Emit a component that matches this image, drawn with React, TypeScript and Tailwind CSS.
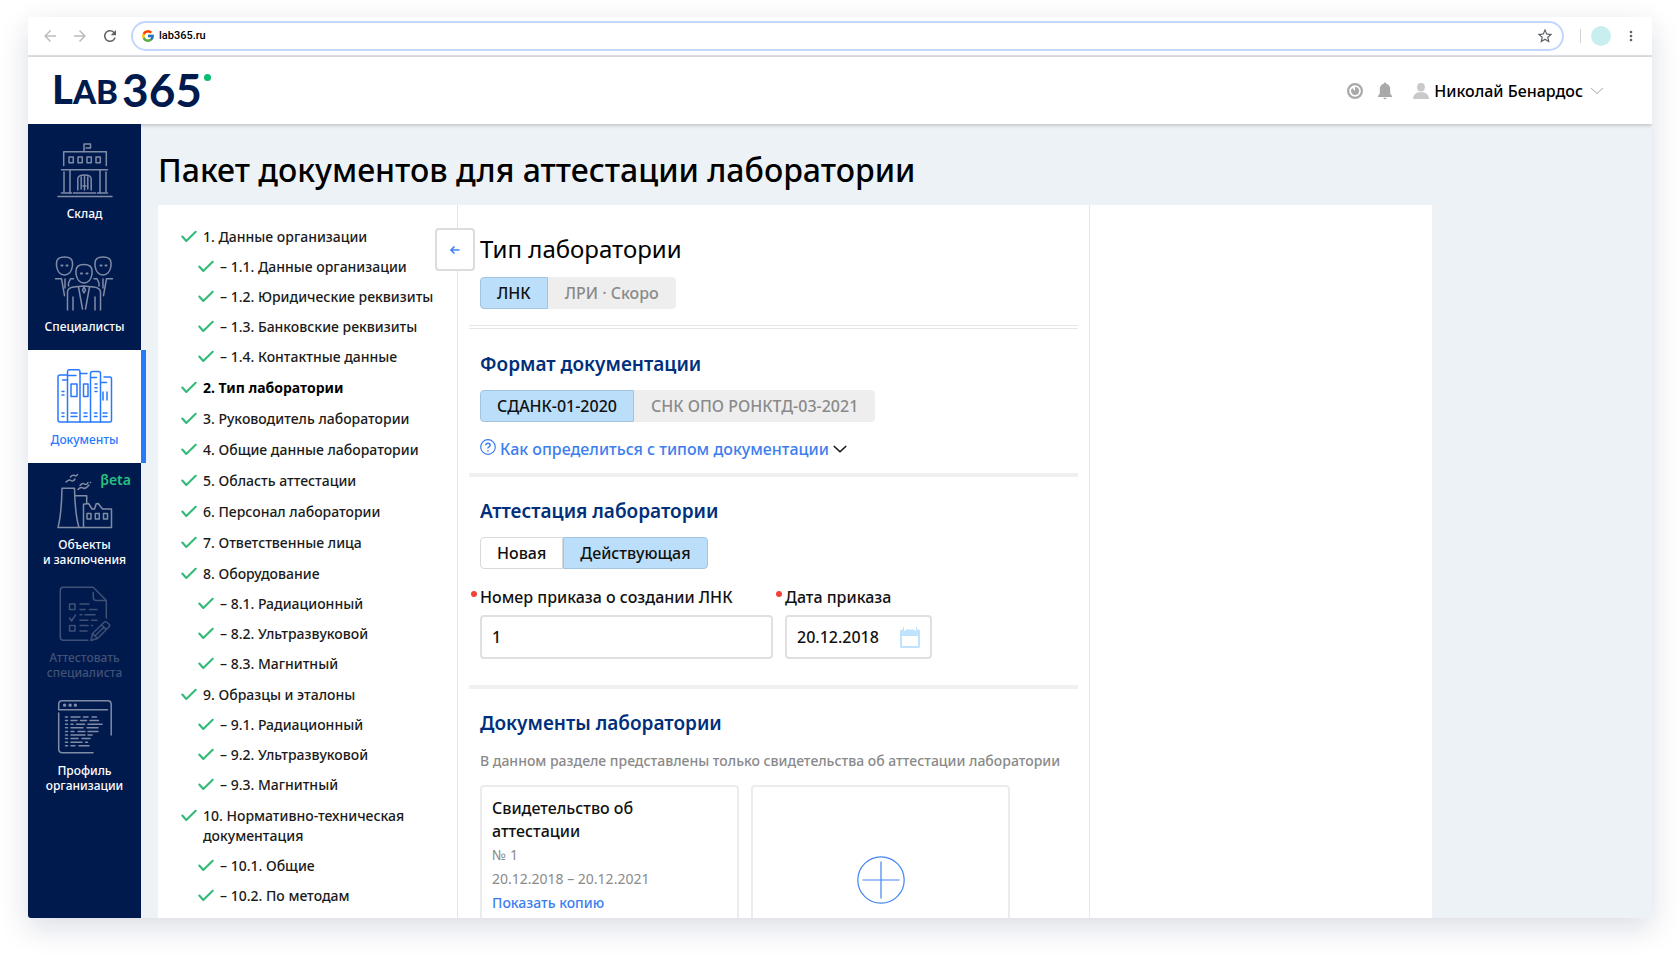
import React from 'react';
import { FcGoogle } from 'react-icons/fc';
import { MdArrowBack, MdArrowForward, MdMoreVert, MdRefresh, MdStarBorder } from 'react-icons/md';

interface IconProps {
  className?: string;
}

interface NavItem {
  lines: string[];
  icon: React.FC<IconProps>;
  active?: boolean;
  disabled?: boolean;
  beta?: boolean;
}

interface Step {
  title: string;
  current?: boolean;
  children?: string[];
}

interface ToggleOption {
  label: string;
  selected?: boolean;
  disabled?: boolean;
}

const NavSvg: React.FC<{ className?: string; children: React.ReactNode }> = ({ className, children }) => (
  <svg
    className={className}
    width="54"
    height="54"
    viewBox="0 0 54 54"
    fill="none"
    stroke="currentColor"
    strokeWidth="1.5"
    strokeLinecap="round"
    strokeLinejoin="round"
    overflow="visible"
    aria-hidden="true"
  >
    {children}
  </svg>
);

const WarehouseIcon: React.FC<IconProps> = ({ className }) => (
  <NavSvg className={className}>
    <path d="M26 8.7V1h6.5v4H28" />
    <path d="M5.7 22.5V8.7h42.6v13.8" />
    <path d="M11 14h4.3v5.7H11zM20 14h4.3v5.7H20zM29 14h4.3v5.7H29zM38 14h4.3v5.7H38z" />
    <path d="M3.5 26.7h46M6 29v20M12 27v23M42 27v23M48 29v20" />
    <path d="M3.5 50h10M15.5 50h22M39.5 50h10M0 53.5h54" />
    <path d="M19.8 47V36q0-4 6.7-4t6.7 4v11M23.2 46V34M29.8 46V34M26.5 33.5V47M25 43h3" />
  </NavSvg>
);

const SpecialistsIcon: React.FC<IconProps> = ({ className }) => (
  <NavSvg className={className}>
    <path d="M-1.5 7Q-1.5 1 6.5 1t8 6v3q-1.500 9-8 9t-8-9z" />
    <path d="M37 7q0-6 8-6t8 6v3q-1.500 9-8 9t-8-9z" />
    <path d="M18 15q0-6.500 8-6.500t8 6.500v3q-1.500 9-8 9t-8-9z" />
    <path d="M3.500 9.500h1M8.500 9.500h1M42.500 9.500h1M47.500 9.500h1M23 17.500h1M28.500 17.500h1" strokeWidth="2" />
    <path d="M-2.500 22.700h6l3 17M7 23v9M10.500 30V27l2-4.300h3" />
    <path d="M54.500 22.700h-6l-3 17M45 23v9M41 30V27l-2-4.300h-3" />
    <path d="M9.500 54V36q0-4 6-5l10-1 10 1q7 1 7 5v18M15 41v13M37 41v13" />
    <path d="M20.500 31l4 22M31.500 31l-4 22M26 31l1.500 3L26 37l-1.500-3z" />
  </NavSvg>
);

const DocumentsIcon: React.FC<IconProps> = ({ className }) => (
  <NavSvg className={className}>
    <path d="M9.500 6H2Q0 6 0 8v43q0 2 2 2h50q1.500 0 1.500-2V10q0-2-1.500-2h-6" />
    <path d="M9.500 53V3q0-2.200 2-2.200h8.500q2 0 2 2.200v50M9.500 6.500H18" />
    <path d="M22 4.500h7M32.500 53V4.500q0-2 2-2h6q2 0 2 2V53M32.500 8.500h6M4.500 11h5M42.500 13.500h6" />
    <path d="M13 15h6v12.500h-6zM25.500 15H30v12.500h-4.500z" />
    <path d="M4 22.500h2M4 26h2M37 15h2M37 18.700h2M37 22.500h2M45 23v8M49 23v8" />
    <path d="M4 44h2M4 47.500h2M13 44h6M13 47.500h6M26 44h3M26 47.500h3M36.500 44h2.500M36.500 47.500h2.500M45 44h4M45 47.500h4" />
  </NavSvg>
);

const FactoryIcon: React.FC<IconProps> = ({ className }) => (
  <NavSvg className={className}>
    <path d="M0 53.500Q3.500 40 4 14.300h12.500Q17 40 21 53.500M0 53.500h53.500V35h-9l-4.300-5.500-2 .2-1.700 5.300h-2.500l-3.500-5.500-5 .8v23.200" />
    <path d="M17.500 21.700h11.200V29" />
    <path d="M29 39.500h4v5.500h-4zM37.300 39.500h4v5.500h-4zM45.500 39.500h4v5.500h-4z" />
    <path d="M8 8q3-3 5-1.500T17 5M12.500 3q2-2.500 4-1.500t3-1M20 15.500q2.500-3 5-1.500t6-3M22 11.500q2.500-3 4.500-1.500T30 8.500M32.500 8.500h.2" />
  </NavSvg>
);

const CertifyIcon: React.FC<IconProps> = ({ className }) => (
  <NavSvg className={className}>
    <path d="M30 53.300H5.300q-3 0-3-3v-47q0-3 3-3h30l13 13.200V31M35.300 5.500v5q0 3 3 3h10" />
    <path d="M11.500 17h5.500v5.500h-5.500zM11.500 38.500h5.500V44h-5.500zM11.500 31l2 3 4-6" />
    <path d="M22 17h9M22 22.500h5M31.500 22.500h7.500M22 27.700h2M27 27.700h10M22 33.300h8M33.500 33.300h5.500M22 38.500h8M33.500 38.500h1M22 44h7" />
    <path d="M33 53.500l1.500-7 12-11.500q1-1 2 0l2.800 2.500q1 1 0 2L39.500 51.500zM34.500 46.500l5 5M43.500 38l5 4.500M37 49l9-9" />
  </NavSvg>
);

const ProfileIcon: React.FC<IconProps> = ({ className }) => (
  <NavSvg className={className}>
    <path d="M.7 9.700V4.500q0-3.700 3.500-3.700h45.500q3.500 0 3.500 3.700V35M.7 9.700h48.800M.7 13v36q0 3.700 3.500 3.700H35" />
    <path d="M6.500 5.200h.2M12 5.200h.2M17.300 5.200h.2" strokeWidth="3.200" />
    <path d="M7.500 17h2M13 17h9M25.500 17h4.500M34 17h4.500M7.500 20.600h2M13 20.600h6M22.500 20.600h6M32 20.600h8.500M7.500 24.200h2M13 24.200h2M18.500 24.200h8M30 24.200h14M7.500 27.800h2M13 27.800h12M29 27.800h11M7.500 31.400h2M13 31.400h3M20 31.400h7M30 31.400h10M7.500 35h2M13 35h14M30 35h4M7.500 38.600h2M13 38.600h7M24 38.600h8M7.500 42.200h2M13 42.200h11M27.500 42.200h2M7.500 45.800h2M13 45.800h4M21 45.800h10" />
  </NavSvg>
);

const CheckIcon = () => (
  <svg className="mt-[3px] shrink-0" width="16" height="13" viewBox="0 0 16 13" fill="none" aria-hidden="true">
    <path d="M1.300 6.500L5.300 11 14.700 1.800" stroke="#34ba78" strokeWidth="2.100" strokeLinecap="round" strokeLinejoin="round" />
  </svg>
);

const navItems: NavItem[] = [
  { lines: ['Склад'], icon: WarehouseIcon },
  { lines: ['Специалисты'], icon: SpecialistsIcon },
  { lines: ['Документы'], icon: DocumentsIcon, active: true },
  { lines: ['Объекты', 'и заключения'], icon: FactoryIcon, beta: true },
  { lines: ['Аттестовать', 'специалиста'], icon: CertifyIcon, disabled: true },
  { lines: ['Профиль', 'организации'], icon: ProfileIcon },
];

const steps: Step[] = [
  {
    title: '1. Данные организации',
    children: [
      '– 1.1. Данные организации',
      '– 1.2. Юридические реквизиты',
      '– 1.3. Банковские реквизиты',
      '– 1.4. Контактные данные',
    ],
  },
  { title: '2. Тип лаборатории', current: true },
  { title: '3. Руководитель лаборатории' },
  { title: '4. Общие данные лаборатории' },
  { title: '5. Область аттестации' },
  { title: '6. Персонал лаборатории' },
  { title: '7. Ответственные лица' },
  { title: '8. Оборудование', children: ['– 8.1. Радиационный', '– 8.2. Ультразвуковой', '– 8.3. Магнитный'] },
  { title: '9. Образцы и эталоны', children: ['– 9.1. Радиационный', '– 9.2. Ультразвуковой', '– 9.3. Магнитный'] },
  { title: '10. Нормативно-техническая документация', children: ['– 10.1. Общие', '– 10.2. По методам'] },
];

const BrowserBar = () => (
  <div className="flex h-10 shrink-0 items-center border-b-2 border-[#e2e4e7] px-[13px] text-[#5f6368]">
    <div className="mr-3 flex items-center gap-3">
      <button type="button" aria-label="Назад" className="text-[#babcbe]">
        <MdArrowBack size={18} />
      </button>
      <button type="button" aria-label="Вперёд" className="text-[#babcbe]">
        <MdArrowForward size={18} />
      </button>
      <button type="button" aria-label="Обновить">
        <MdRefresh size={18} />
      </button>
    </div>
    <div className="flex h-[30px] flex-1 items-center rounded-full border-2 border-[#c2d7fb] px-2">
      <FcGoogle size={14} />
      <input
        type="text"
        aria-label="Адрес"
        defaultValue="lab365.ru"
        className="ml-1 min-w-0 flex-1 font-['Roboto',sans-serif] text-[11px] font-medium text-black outline-none"
      />
      <button type="button" aria-label="В закладки">
        <MdStarBorder size={18} />
      </button>
    </div>
    <span className="ml-4 h-3.5 w-px bg-[#d0d2d5]" />
    <span className="ml-2.5 size-5 rounded-full bg-[#c8efef]" />
    <button type="button" aria-label="Меню" className="ml-3">
      <MdMoreVert size={16} />
    </button>
  </div>
);

const Header = () => (
  <header className="z-10 flex h-[67px] shrink-0 items-center justify-between bg-white pr-12 pl-6 shadow-[0_1px_4px_rgba(0,0,0,0.25)]">
    <a href="#" className="flex items-center pb-0.5 font-['Lato',sans-serif] font-bold text-[#001a4d]">
      <span className="text-[33px] leading-10 font-black">
        <span className="text-[40px]">L</span>AB
      </span>
      <span className="ml-1 text-[46px] leading-10">365</span>
      <span className="mb-6 ml-0.5 size-[7px] rounded-full bg-[#06be71]" />
    </a>
    <div className="flex items-center">
      <button type="button" aria-label="История" className="text-[#a9a9a9]">
        <svg width="16" height="16" viewBox="0 0 16 16" fill="none">
          <circle cx="8" cy="8" r="6.900" stroke="currentColor" strokeWidth="2.200" />
          <path d="M8 3.800v4.200L5.200 5A4.100 4.100 0 1 0 8 3.800z" fill="currentColor" />
        </svg>
      </button>
      <button type="button" aria-label="Уведомления" className="ml-3.5 text-[#a9a9a9]">
        <svg width="16" height="18" viewBox="0 0 16 18" fill="currentColor">
          <path d="M8 .5c.8 0 1.300.6 1.300 1.300 2.600.6 3.900 2.700 3.900 5.200v4.500L15 14v1H1v-1l1.800-2.500V7c0-2.500 1.300-4.600 3.900-5.200C6.700 1.100 7.200.5 8 .5zM6.400 15.700h3.200a1.600 1.600 0 0 1-3.200 0z" />
        </svg>
      </button>
      <button type="button" className="ml-5 flex items-center text-[16px] font-medium text-black">
        <svg width="16" height="16" viewBox="0 0 16 16" fill="#c9c9c9" aria-hidden="true">
          <ellipse cx="8" cy="4.200" rx="3.900" ry="4.200" />
          <path d="M0 16q.3-4 2.600-5.500l2.700-1.200h5.400l2.700 1.200Q15.700 12 16 16z" />
        </svg>
        <span className="ml-[5px]">Николай Бенардос</span>
        <svg className="ml-[7px]" width="14" height="8" viewBox="0 0 14 8" fill="none" stroke="#a9a9a9" aria-hidden="true">
          <path d="M1 1l6 5.500L13 1" />
        </svg>
      </button>
    </div>
  </header>
);

const navColor = (item: NavItem) => {
  if (item.active) return 'bg-white text-[#2979ff] border-r-[5px] border-[#2979ff] -mr-[5px]';
  if (item.disabled) return 'text-[#405176]';
  return 'text-white';
};

const Sidebar = () => (
  <nav className="z-10 w-[113px] shrink-0 bg-[#001a4d]">
    {navItems.map(item => (
      <a
        key={item.lines[0]}
        href="#"
        className={`relative flex h-[113px] flex-col items-center justify-center pt-0.5 text-center text-[12px] leading-[15px] font-medium ${navColor(item)}`}
      >
        <item.icon className={item.active || item.disabled ? '' : 'text-[#808ca6]'} />
        <span className="mt-[9px]">
          {item.lines.map(line => (
            <span key={line} className="block">
              {line}
            </span>
          ))}
        </span>
        {item.beta && <span className="absolute top-[9px] right-2.5 text-[14px] font-semibold text-[#27c07d]">βeta</span>}
      </a>
    ))}
  </nav>
);

const Steps = () => (
  <ol className="flex w-[300px] shrink-0 flex-col gap-[11px] border-r border-[#e4e4e4] pt-[22px] pl-[23px] text-[14px] leading-5 font-medium text-[#1a1a1a]">
    {steps.map(step => (
      <li key={step.title}>
        <a href="#" className={`flex gap-1.5 ${step.current ? 'font-bold text-black' : ''}`}>
          <CheckIcon />
          <span className="max-w-[220px]">{step.title}</span>
        </a>
        {step.children && (
          <ol className="mt-2.5 flex flex-col gap-2.5 pl-[17px]">
            {step.children.map(child => (
              <li key={child}>
                <a href="#" className="flex gap-1.5 whitespace-nowrap">
                  <CheckIcon />
                  <span>{child}</span>
                </a>
              </li>
            ))}
          </ol>
        )}
      </li>
    ))}
  </ol>
);

const toggleStyle = (option: ToggleOption) => {
  if (option.selected) return 'border-[#a3c4de] bg-[#bbdefb] text-[#111111]';
  if (option.disabled) return 'border-[#eeeeee] bg-[#eeeeee] text-[#8a8a8a]';
  return 'border-[#d9d9d9] bg-white text-[#111111]';
};

const Toggle: React.FC<{ label: string; options: ToggleOption[] }> = ({ label, options }) => (
  <div role="group" aria-label={label} className="mt-3 flex">
    {options.map(option => (
      <button
        key={option.label}
        type="button"
        disabled={option.disabled}
        aria-pressed={!!option.selected}
        className={`h-8 border px-4 text-[16px] leading-6 font-medium first:rounded-l last:rounded-r ${toggleStyle(option)}`}
      >
        {option.label}
      </button>
    ))}
  </div>
);

const SectionTitle: React.FC<{ children: React.ReactNode }> = ({ children }) => (
  <h3 className="text-[19px] leading-7 font-semibold text-[#002f7b]">{children}</h3>
);

const Field: React.FC<{ id: string; label: string; value: string; className: string; children?: React.ReactNode }> = ({
  id,
  label,
  value,
  className,
  children,
}) => (
  <div className={className}>
    <label htmlFor={id} className="relative block text-[16px] leading-6 font-medium whitespace-nowrap">
      <span className="absolute top-1.5 -left-[9px] size-[6px] rounded-full bg-[#f44336]" />
      {label}
    </label>
    <div className="mt-1.5 flex h-11 items-center rounded border-2 border-[#e0e0e0] px-2.5">
      <input id={id} type="text" defaultValue={value} className="w-full min-w-0 text-[16px] font-medium outline-none" />
      {children}
    </div>
  </div>
);

const LabTypeForm = () => (
  <main className="relative w-[632px] shrink-0 border-r border-[#e8e8e8] pr-[11px] pl-[11px] text-[#111111]">
    <button
      type="button"
      aria-label="Свернуть список"
      className="absolute top-[23px] -left-[23px] flex h-[43px] w-10 items-center justify-center rounded border-2 border-[#dcdcdc] bg-white text-[#4285f4]"
    >
      <svg width="10" height="8" viewBox="0 0 10 8" fill="none" stroke="currentColor" strokeWidth="1.600">
        <path d="M9.500 4H1M4.500.5L1 4l3.500 3.500" />
      </svg>
    </button>

    <section className="border-b-4 border-double border-[#e6e6e6] px-[11px] pt-7 pb-4">
      <h2 className="text-[24px] leading-8 text-black">Тип лаборатории</h2>
      <Toggle
        label="Тип лаборатории"
        options={[
          { label: 'ЛНК', selected: true },
          { label: 'ЛРИ · Скоро', disabled: true },
        ]}
      />
    </section>

    <section className="border-b-4 border-[#f0f0f0] px-[11px] pt-[21px] pb-3">
      <SectionTitle>Формат документации</SectionTitle>
      <Toggle
        label="Формат документации"
        options={[
          { label: 'СДАНК-01-2020', selected: true },
          { label: 'СНК ОПО РОНКТД-03-2021', disabled: true },
        ]}
      />
      <button type="button" className="mt-[15px] flex items-center text-[16px] leading-6 font-medium text-[#3d7eee]">
        <svg className="mb-1" width="16" height="16" viewBox="0 0 16 16" fill="none" stroke="currentColor" aria-hidden="true">
          <circle cx="8" cy="8" r="7.300" strokeWidth="1.200" />
          <path d="M5.800 6.200Q5.900 4.200 8 4.200T10.200 6.100Q10.200 7.200 9 7.800T8 9.500M8 11.200v1.300" strokeWidth="1.500" />
        </svg>
        <span className="ml-1">Как определиться с типом документации</span>
        <svg className="ml-1" width="14" height="8" viewBox="0 0 14 8" fill="none" stroke="#111111" strokeWidth="1.500" aria-hidden="true">
          <path d="M.8 1L7 6.800 13.200 1" />
        </svg>
      </button>
    </section>

    <section className="border-b-4 border-[#f0f0f0] px-[11px] pt-5 pb-[26px]">
      <SectionTitle>Аттестация лаборатории</SectionTitle>
      <Toggle label="Аттестация лаборатории" options={[{ label: 'Новая' }, { label: 'Действующая', selected: true }]} />
      <div className="mt-4 flex gap-3">
        <Field id="order-number" label="Номер приказа о создании ЛНК" value="1" className="w-[293px]" />
        <Field id="order-date" label="Дата приказа" value="20.12.2018" className="w-[147px]">
          <svg className="shrink-0" width="20" height="21" viewBox="0 0 20 21" fill="#bfe2fd" aria-hidden="true">
            <path fillRule="evenodd" d="M1.500 2.500H3V0h1v4h1.500V2.500h9V4H16V0h1v2.500h1.500Q20 2.500 20 4v15.500q0 1.500-1.500 1.500h-17Q0 21 0 19.500V4q0-1.500 1.500-1.500zM2 9v10h16V9z" />
          </svg>
        </Field>
      </div>
    </section>

    <section className="px-[11px] pt-5">
      <SectionTitle>Документы лаборатории</SectionTitle>
      <p className="mt-3 text-[14px] leading-6 font-medium whitespace-nowrap text-[#8a8a8a]">
        В данном разделе представлены только свидетельства об аттестации лаборатории
      </p>
      <div className="mt-3 flex gap-3">
        <article className="h-[190px] w-[259px] rounded border-2 border-[#ececec] px-2.5 pt-2.5 text-[14px] leading-6 text-[#8a8a8a]">
          <h4 className="max-w-[200px] text-[16px] leading-[23px] font-medium text-[#111111]">Свидетельство об аттестации</h4>
          <p>№ 1</p>
          <p>20.12.2018 – 20.12.2021</p>
          <a href="#" className="font-medium text-[#3d7eee]">
            Показать копию
          </a>
        </article>
        <button
          type="button"
          aria-label="Добавить документ"
          className="flex h-[190px] w-[259px] items-center justify-center rounded border-2 border-[#ececec] text-[#4285f4]"
        >
          <svg width="48" height="48" viewBox="0 0 48 48" fill="none" stroke="currentColor" strokeWidth="1.200">
            <circle cx="24" cy="24" r="23.200" />
            <path d="M24 5.500v37M5.500 24h37" />
          </svg>
        </button>
      </div>
    </section>
  </main>
);

const App = () => (
  <div className="h-screen bg-white px-7 pt-[17px] pb-10 font-['Noto_Sans',sans-serif]">
    <div className="flex h-full flex-col overflow-hidden rounded-[3px] bg-white shadow-[0_10px_30px_rgba(0,27,78,0.15)]">
      <BrowserBar />
      <Header />
      <div className="flex min-h-0 flex-1 bg-[#edf2f6]">
        <Sidebar />
        <div className="flex min-w-0 flex-1 flex-col overflow-hidden pl-[17px]">
          <h1 className="pt-[26px] pb-[15px] text-[32px] leading-10 font-medium whitespace-nowrap text-black">
            Пакет документов для аттестации лаборатории
          </h1>
          <div className="mr-[220px] flex min-h-0 flex-1 bg-white">
            <Steps />
            <LabTypeForm />
          </div>
        </div>
      </div>
    </div>
  </div>
);

export default App;
